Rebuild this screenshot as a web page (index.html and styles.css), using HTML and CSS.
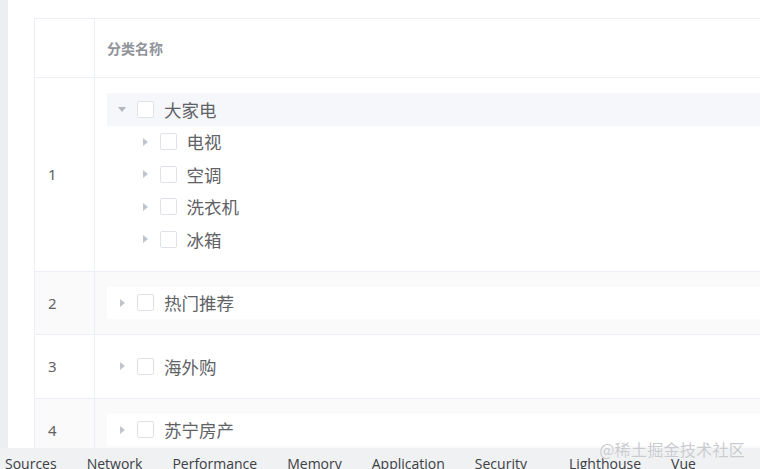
FILE: index.html
```html
<!DOCTYPE html>
<html lang="zh-CN">
<head>
    <meta charset="UTF-8">
    <meta name="viewport" content="width=device-width, initial-scale=1.0">
    <title>分类管理</title>
    <link rel="stylesheet" href="styles.css">
</head>
<body>
    <div class="app">
        <div class="viewport">
            <div class="side"></div>
            <div class="main">
                <div class="cat-table">
                    <div class="row head">
                        <div class="cell idx"></div>
                        <div class="cell name">分类名称</div>
                    </div>

                    <div class="row">
                        <div class="cell idx">1</div>
                        <div class="cell">
                            <div class="tree">
                                <div class="node current">
                                    <span class="caret open"></span>
                                    <span class="check"></span>
                                    <span class="label">大家电</span>
                                </div>
                                <div class="children">
                                    <div class="node"><span class="caret"></span><span class="check"></span><span class="label">电视</span></div>
                                    <div class="node"><span class="caret"></span><span class="check"></span><span class="label">空调</span></div>
                                    <div class="node"><span class="caret"></span><span class="check"></span><span class="label">洗衣机</span></div>
                                    <div class="node"><span class="caret"></span><span class="check"></span><span class="label">冰箱</span></div>
                                </div>
                            </div>
                        </div>
                    </div>

                    <div class="row striped">
                        <div class="cell idx">2</div>
                        <div class="cell">
                            <div class="tree">
                                <div class="node"><span class="caret"></span><span class="check"></span><span class="label">热门推荐</span></div>
                            </div>
                        </div>
                    </div>

                    <div class="row">
                        <div class="cell idx">3</div>
                        <div class="cell">
                            <div class="tree">
                                <div class="node"><span class="caret"></span><span class="check"></span><span class="label">海外购</span></div>
                            </div>
                        </div>
                    </div>

                    <div class="row striped">
                        <div class="cell idx">4</div>
                        <div class="cell">
                            <div class="tree">
                                <div class="node"><span class="caret"></span><span class="check"></span><span class="label">苏宁房产</span></div>
                            </div>
                        </div>
                    </div>
                </div>
            </div>
        </div>

        <div class="devtools">
            <span>Sources</span>
            <span>Network</span>
            <span>Performance</span>
            <span>Memory</span>
            <span>Application</span>
            <span>Security</span>
            <span class="wide">Lighthouse</span>
            <span>Vue</span>
        </div>

        <div class="watermark">@稀土掘金技术社区</div>
    </div>
</body>
</html>
```

FILE: styles.css
```css
html, body {
    margin: 0;
    padding: 0;
    height: 100%;
    overflow: hidden;
}
body {
    font-family: "Noto Sans CJK SC", "Noto Sans", sans-serif;
    color: #606266;
    background-color: #fff;
}
.app {
    position: relative;
    height: 469px;
    display: flex;
    flex-direction: column;
}
.viewport {
    height: 448px;
    display: flex;
    overflow: hidden;
}
.side {
    width: 8px;
    flex: none;
    background-color: #eceef1;
}
.main {
    flex: 1;
    padding: 18px 0 0 26px;
    overflow: hidden;
}
.cat-table {
    border-top: 1px solid #ebeef5;
    border-left: 1px solid #ebeef5;
}
.row {
    display: grid;
    grid-template-columns: 60px 1fr;
    border-bottom: 1px solid #ebeef5;
    background-color: #fff;
}
.row.striped {
    background-color: #fafafa;
}
.cell {
    padding: 15px 0 15px 12px;
    display: flex;
    align-items: center;
}
.cell.idx {
    padding-left: 13px;
    border-right: 1px solid #ebeef5;
    font-family: "Noto Sans", sans-serif;
    font-size: 15px;
}
.row.head .cell {
    height: 58px;
    padding-top: 0;
    padding-bottom: 0;
    box-sizing: border-box;
}
.cell.name {
    font-size: 14px;
    font-weight: bold;
    color: #909399;
}
.tree {
    flex: 1;
    background-color: #fff;
}
.node {
    height: 32.5px;
    display: flex;
    align-items: center;
    font-size: 17.5px;
}
.node.current {
    background-color: #f5f7fa;
}
.children .node {
    padding-left: 22.5px;
}
.caret {
    width: 30px;
    height: 100%;
    flex: none;
    display: flex;
    align-items: center;
    justify-content: center;
}
.caret::before {
    content: "";
    width: 0;
    height: 0;
    border-top: 4px solid transparent;
    border-bottom: 4px solid transparent;
    border-left: 5px solid #c0c4cc;
    margin-left: 1px;
}
.caret.open::before {
    border-left: 4.5px solid transparent;
    border-right: 4.5px solid transparent;
    border-top: 5px solid #b4b7bd;
    border-bottom: 0;
    margin-left: 0;
}
.check {
    width: 17px;
    height: 17px;
    flex: none;
    box-sizing: border-box;
    border: 1px solid #dfe2e8;
    border-radius: 2px;
    background-color: #fff;
    margin-right: 10px;
}
.label {
    line-height: 1;
}
.devtools {
    height: 21px;
    overflow: hidden;
    background-color: #eff1f3;
    display: flex;
    gap: 30px;
    padding-left: 5px;
    font-family: "Open Sans", "Noto Sans", sans-serif;
    font-size: 14px;
    color: #3c4043;
    line-height: 21px;
    padding-top: 5px;
    box-sizing: border-box;
}
.devtools span {
    white-space: nowrap;
}
.devtools .wide {
    margin-left: 12px;
}
.watermark {
    position: absolute;
    right: 15px;
    top: 437px;
    font-size: 16px;
    color: #c9cbcf;
    letter-spacing: 0.3px;
    text-shadow: 0 0 1px #fff;
}
```
